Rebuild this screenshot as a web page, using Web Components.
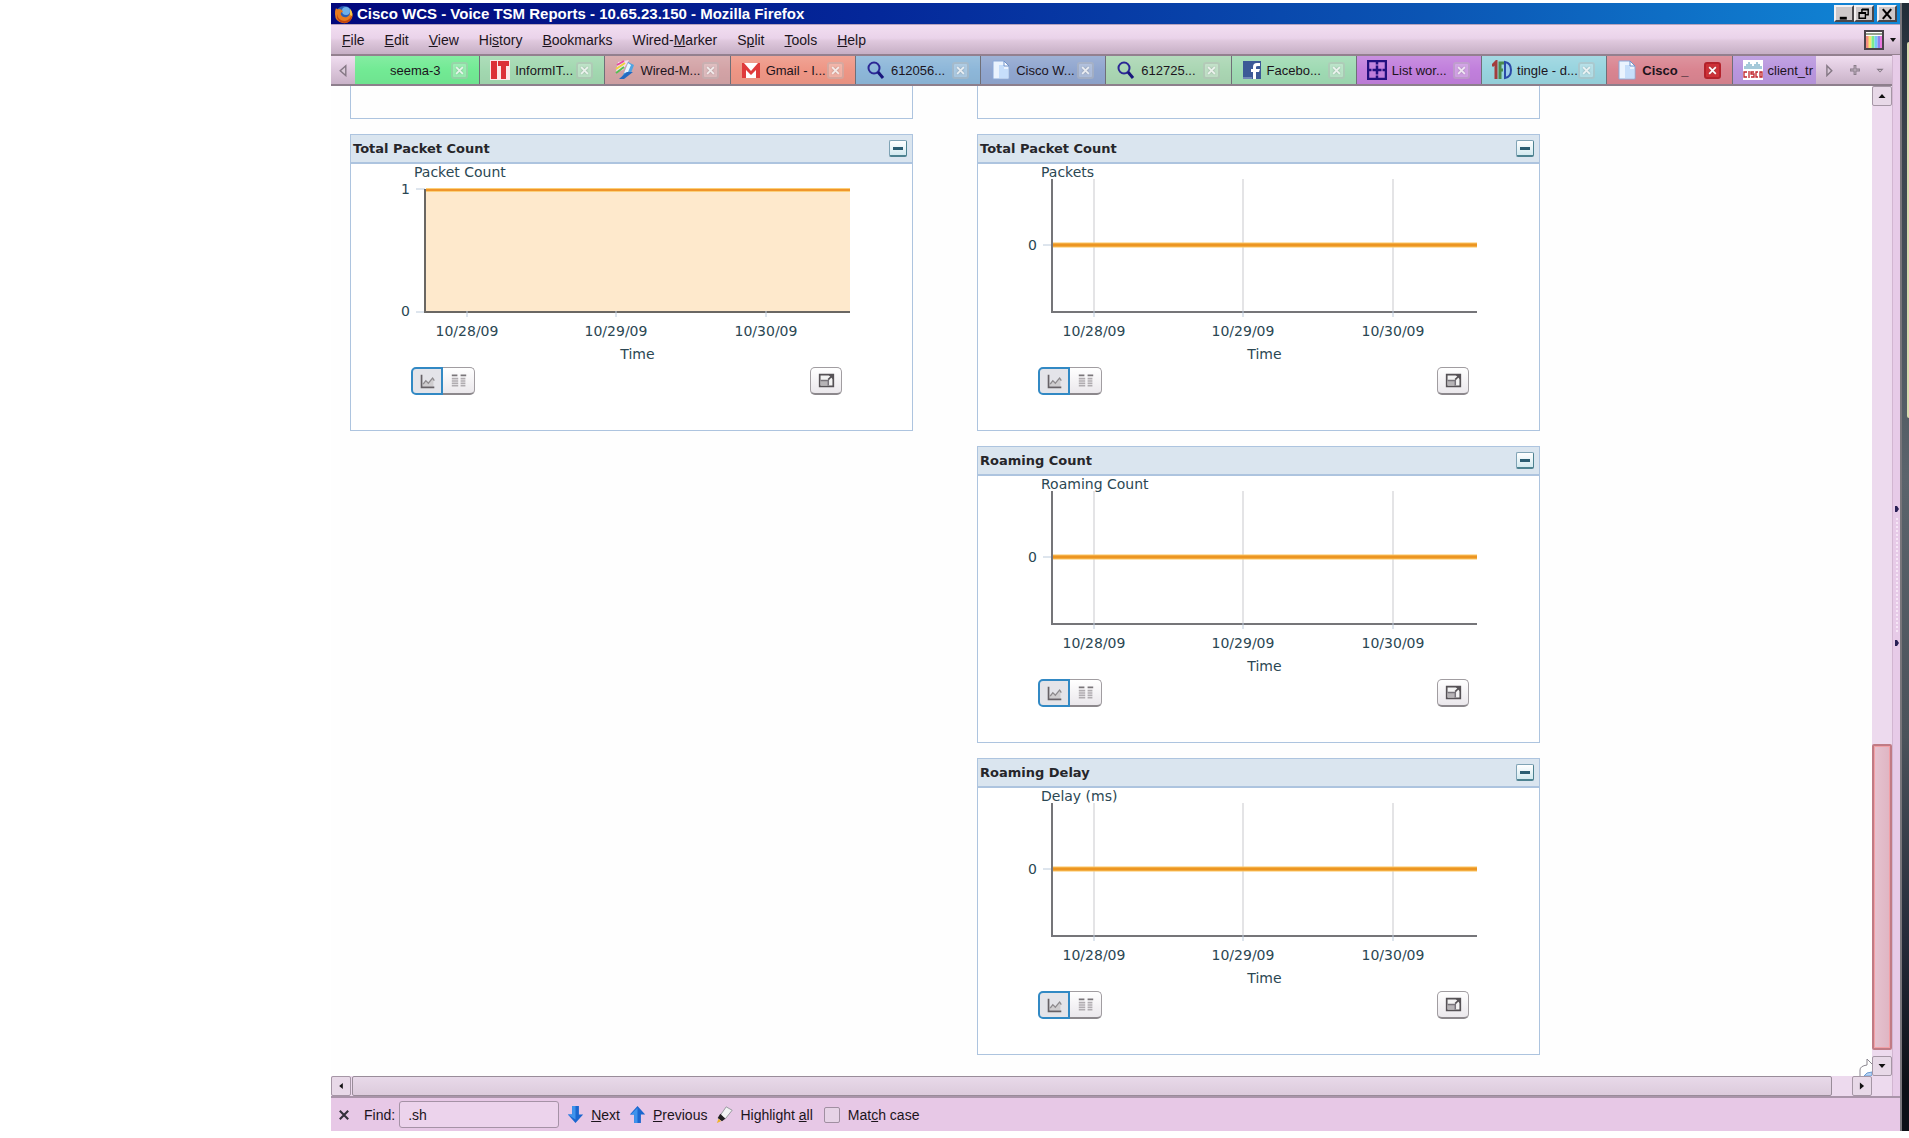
<!DOCTYPE html>
<html lang="en">
<head>
<meta charset="utf-8">
<title>Cisco WCS - Voice TSM Reports</title>
<style>
  body {
    margin: 0;
    background: #fff;
    font-family: "Liberation Sans", Arial, sans-serif;
    font-size: 14px;
    color: #1c141c;
  }

  .screen {
    display: grid;
    grid-template-columns: minmax(0, 331fr) minmax(0, 1569fr) minmax(0, 9fr);
    min-height: 100vh;
    box-sizing: border-box;
    padding: 3px 0 7px;
  }

  browser-window { grid-column: 2; }

  /* slice of the desktop that shows to the right of the window */
  .desktop {
    background: linear-gradient(#222d38, #3a444c 12%, #5b646c 42%, #4b535b 65%, #252c3a 83%, #0c1016 96%);
    border-left: 2px solid #77757a;
    display: flex;
    justify-content: flex-end;
    align-items: flex-start;
  }

  .desktop span {
    width: 2px;
    height: 33vh;
    margin-top: 39px;
    background: #d9dcae;
    border-radius: 2px 0 0 2px;
  }

  .reports {
    display: grid;
    grid-template-columns: minmax(0, 1fr) minmax(0, 1fr);
    column-gap: 64px;
    padding: 0 332px 21px 19px;
  }

  .column {
    display: flex;
    flex-direction: column;
    gap: 15px;
  }

  .cut-panel {
    height: 32px;
    border: 1px solid #adc4df;
    border-width: 0 1px 1px;
  }
</style>
</head>
<body>
<div class="screen">
  <browser-window>
    <title-bar slot="title">Cisco WCS - Voice TSM Reports - 10.65.23.150 - Mozilla Firefox</title-bar>
    <menu-bar slot="menu"></menu-bar>
    <tab-bar slot="tabs">
      <browser-tab color="#72ea94">seema-3</browser-tab>
      <browser-tab color="#a2d8b0" icon="informit">InformIT...</browser-tab>
      <browser-tab color="#d3a3a6" icon="marker">Wired-M...</browser-tab>
      <browser-tab color="#ee9685" icon="gmail">Gmail - I...</browser-tab>
      <browser-tab color="#8db7d9" icon="search">612056...</browser-tab>
      <browser-tab color="#90a6cf" icon="page">Cisco W...</browser-tab>
      <browser-tab color="#aad6b3" icon="search">612725...</browser-tab>
      <browser-tab color="#9fdab3" icon="facebook">Facebo...</browser-tab>
      <browser-tab color="#c17fdc" icon="grid">List wor...</browser-tab>
      <browser-tab color="#98d4df" icon="tfd">tingle - d...</browser-tab>
      <browser-tab color="#d98490" icon="page" active>Cisco _</browser-tab>
      <browser-tab color="#b996de" icon="cisco" noclose>client_tr</browser-tab>
    </tab-bar>

    <div class="reports">
      <div class="column">
        <div class="cut-panel"></div>
        <chart-panel heading="Total Packet Count" label="Packet Count" type="area"></chart-panel>
      </div>
      <div class="column">
        <div class="cut-panel"></div>
        <chart-panel heading="Total Packet Count" label="Packets"></chart-panel>
        <chart-panel heading="Roaming Count" label="Roaming Count"></chart-panel>
        <chart-panel heading="Roaming Delay" label="Delay (ms)"></chart-panel>
      </div>
    </div>

    <find-bar slot="find"></find-bar>
  </browser-window>
  <div class="desktop"><span></span></div>
</div>

<script>
const ICONS = {
  firefox: `<circle cx="10" cy="10" r="8" fill="#2a5fb4"/><circle cx="12" cy="7" r="4" fill="#6fb0e8"/>
    <path d="M2 4 Q3 6 5 5 Q8 5 9 8 Q6 8 7 11 Q9 14 13 13 Q17 11 16 5 Q20 10 18 14 Q15 20 9 19 Q1 18 1 10 Q1 6 2 4Z" fill="#e77a1d"/>
    <path d="M3 10 Q4 17 11 17 Q16 16 18 11 Q18 19 10 19 Q2 18 3 10Z" fill="#c2440f"/><path d="M16 5 Q19 8 18 12 L16 11Z" fill="#f7c846"/>`,
  informit: `<rect width="20" height="20" fill="#fbe9ea"/><path d="M1 1h6v18H1zM8 1h11v5h-3v13h-5V6H8z" fill="#dc3038"/>`,
  marker: `<path d="M3 2 L14 0 L8 10 L1 12Z" fill="#f3dff0"/><path d="M2 5 L9 1" stroke="#e44aa0" stroke-width="2"/>
    <path d="M1 9 L10 3" stroke="#efd23c" stroke-width="2"/><path d="M1 13 L9 7" stroke="#55bf52" stroke-width="2"/>
    <path d="M13 2 L19 5 L16 13 L6 19 L10 11Z" fill="#4fa3e2"/><path d="M13 3 L16 5 L13 12 L9 13Z" fill="#eaf6ff"/><path d="M4 19 L12 12 L18 12 L9 19Z" fill="#236ac1"/>`,
  gmail: `<path d="M1 3h18v15H1z" fill="#fff"/><path d="M1 18V3h2l7 8 7-8h2v15h-4V10l-5 5-5-5v8z" fill="#df3b3b"/>`,
  search: `<circle cx="8" cy="8" r="5.5" fill="none" stroke="#2b2795" stroke-width="2"/><path d="M12 12 L17 18" stroke="#19167c" stroke-width="3"/>`,
  page: `<path d="M2 1h11l5 5v13H2z" fill="#eaf3fe" stroke="#8ba9d8"/><path d="M8 5h5v4h4v9H8z" fill="#c6defb"/><path d="M13 1v5h5z" fill="#fff" stroke="#6f92cb"/>`,
  facebook: `<rect x="1" y="1" width="18" height="18" fill="#3c5a97"/><path d="M11 19v-7H9V9h2V7q0-4 4-4h3v3h-2q-2 0-2 1v2h4l-1 3h-3v7z" fill="#fff"/><path d="M1 17h9v2H1z" fill="#7187b8"/>`,
  grid: `<path d="M1 1h18v18H1zM1 10h18M10 1v18" fill="none" stroke="#22107f" stroke-width="2.5"/><path d="M8 5h4M8 15h4M5 8v4M15 8v4" stroke="#c17fdc"/>`,
  tfd: `<path d="M0 6 L4 2 V19" fill="none" stroke="#a33c3c" stroke-width="3"/><path d="M8 19V3h4M8 10h3" fill="none" stroke="#4c8b4e" stroke-width="3"/>
    <path d="M13 2v16q6-1 6-8t-6-8z" fill="#9ccbe8" stroke="#2b4aa8" stroke-width="2"/>`,
  cisco: `<rect width="20" height="20" fill="#fff"/><path d="M2 6v3M4 4v5M6 2v7M8 4v5M10 6v3M12 4v5M14 2v7M16 4v5M18 6v3" stroke="#4d93b3"/>
    <path d="M4 12H1v5h3M6 11v7M11 12H8v2h3v3H8M15 12h-2v5h2M17 12h2v5h-2z" fill="none" stroke="#c0242b" stroke-width="1.300"/>`,
  palette: `<rect x="1" y="1" width="18" height="18" fill="#fff" stroke="#4b434b" stroke-width="2"/><path d="M2 4h16" stroke="#96a08e" stroke-width="2"/>
    <path d="M3.500 6v12" stroke="#f58e82" stroke-width="3"/><path d="M6 6v12" stroke="#f4e671" stroke-width="3"/><path d="M9 6v12" stroke="#7bea8d" stroke-width="3"/>
    <path d="M12 6v12" stroke="#74c9f5" stroke-width="3"/><path d="M15 6v12" stroke="#8d80ef" stroke-width="3"/><path d="M17 6v12" stroke="#ea77dd" stroke-width="2"/>`,
  min: `<path d="M4 16h10" stroke="#000" stroke-width="4"/>`,
  restore: `<path d="M7 3h9v8h-3M7 3v4" fill="none" stroke="#000" stroke-width="2"/><path d="M3 8h9v8H3z" fill="none" stroke="#000" stroke-width="2"/><path d="M3 9h9M7 4h9" stroke="#000" stroke-width="2"/>`,
  close: `<path d="M4 3 L16 17M16 3 L4 17" stroke="#000" stroke-width="3"/>`,
  cross: `<path d="M4 4 L16 16M16 4 L4 16" stroke="currentColor" stroke-width="3"/>`,
  left: `<path d="M14 4 L6 11 L14 18Z" fill="#d9c9d8" stroke="#857885" stroke-width="2"/>`,
  right: `<path d="M7 4 L14 11 L7 18Z" fill="#d9c9d8" stroke="#857885" stroke-width="2"/>`,
  plus: `<path d="M10 3v14M3 10h14" stroke="#857885" stroke-width="4"/><path d="M10 4v12M4 10h12" stroke="#d9c9d8" stroke-width="1"/>`,
  drop: `<path d="M4 8h12l-6 6z" fill="#857885"/><path d="M8 10h4l-2 2z" fill="#e6d9e5"/>`,
  up: `<path d="M5 13h10l-5-6z" fill="#111"/>`,
  down: `<path d="M5 7h10l-5 6z" fill="#111"/>`,
  sleft: `<path d="M13 5v10l-6-5z" fill="#111"/>`,
  sright: `<path d="M7 5v10l6-5z" fill="#111"/>`,
  next: `<path d="M6 0h8v10h5l-9 10L1 10h5z" fill="#1b67cf"/><path d="M6 0h4v16L1 10h5z" fill="#3f93ec"/>`,
  prev: `<path d="M6 20h8V10h5L10 0 1 10h5z" fill="#1b67cf"/><path d="M6 20h4V2L2 10h4z" fill="#3f93ec"/>`,
  highlight: `<path d="M12 1 L19 5 L11 15 L5 11Z" fill="#f2f4f4" stroke="#8b8f94"/><path d="M5 9 L11 15 L7 18 L2 14Z" fill="#222"/><path d="M3 15 L6 18 L1 20Z" fill="#f0b428"/>`,
  line: `<path d="M4 12 L8 9 L12 12 L17 6 V16 H4Z" fill="#cfcdcf"/><path d="M3 2v15h15" fill="none" stroke="#666166" stroke-width="2"/><path d="M5 13 L8 9 L11 12 L16 6 L18 9" fill="none" stroke="#8e8b8e" stroke-width="1.500"/>`,
  table: `<path d="M1 3h7M12 3h7" stroke="#7a767a" stroke-width="2"/><path d="M1 7h8M12 7h6M1 10h8M12 10h6M1 13h8M12 13h6M1 16h8M12 16h6" stroke="#b0acb0" stroke-width="2"/>`,
  expand: `<path d="M2 3h16v14H2z" fill="#f3f3f3" stroke="#565256" stroke-width="2"/><path d="M3 10h8v6H3z" fill="#b7b4b7"/>
    <path d="M3 10h9v6" fill="none" stroke="#77737a" stroke-width="2"/><path d="M12 9 L16 5" stroke="#565256" stroke-width="2"/><path d="M12 3h6v6z" fill="#565256"/>`
};

const icon = (name, size = 20) =>
  `<svg width="${size}" height="${size}" viewBox="0 0 20 20" aria-hidden="true">${ICONS[name] || ''}</svg>`;

// resets used by every shadow root
const BASE = `
  :host, * { box-sizing: border-box; }
  svg { display: block; flex: none; }
  button {
    font: inherit;
    color: inherit;
    margin: 0;
    padding: 0;
    border: 0;
    background: none;
    display: flex;
    align-items: center;
    justify-content: center;
    white-space: nowrap;
  }
`;


class BrowserWindow extends HTMLElement {
  constructor() {
    super();
    this.attachShadow({ mode: 'open' }).innerHTML = `
      <style>
        ${BASE}
        :host { display: flex; flex-direction: column; }
        .middle { display: flex; flex: 1; }
        .inner { flex: 1; min-width: 0; display: flex; flex-direction: column; }
        .view { flex: 1; display: flex; }
        .page { flex: 1; min-width: 0; position: relative; background: #fefefe; }
        .hint { position: absolute; right: 0; bottom: 0; }
        .vscroll, .hscroll { background: #eddaee; display: flex; flex: none; }
        .vscroll { width: 20px; flex-direction: column; }
        .hscroll { height: 20px; padding-right: 20px; }
        .vscroll .track, .hscroll .track { flex: 1; display: flex; }
        .vscroll .track { flex-direction: column; padding-bottom: 6px; }
        .hscroll .track { padding: 0 20px 0 1px; }
        .vscroll .gap { flex: 641; }
        .vscroll .thumb {
          flex: 303;
          border: 2px solid #c07b85;
          border-radius: 2px;
          background: linear-gradient(90deg, #e6c3d0, #dfb5c3);
          box-shadow: inset 0 0 0 1px #f2a0a6;
        }
        .hscroll .thumb {
          flex: 1;
          border: 1px solid #998c99;
          border-radius: 2px;
          background: linear-gradient(#e8d9e9, #dccbdc);
        }
        button.arrow {
          width: 20px;
          height: 20px;
          border: 1px solid #a596a5;
          border-radius: 2px;
          background: #e8d9e8;
        }
        .splitter {
          width: 8px;
          background: #e7cbe8;
          border-left: 1px solid #d2b6d1;
          display: flex;
          flex-direction: column;
          align-items: center;
          justify-content: center;
          gap: 6px;
        }
        .dots { width: 2px; height: 116px; background: repeating-linear-gradient(#f6e6f6 0 2px, #e7cbe8 2px 4px); }
      </style>
      <slot name="title"></slot>
      <slot name="menu"></slot>
      <div class="middle">
        <div class="inner">
          <slot name="tabs"></slot>
          <div class="view">
            <div class="page">
              <slot></slot>
              <svg class="hint" width="13" height="18" viewBox="0 0 13 18">
                <path d="M1 18v-6q0-4 7-5V1l5 5" fill="none" stroke="#8b8790"/>
                <path d="M5 18q2-4 8-4v4z" fill="#b7d4f3" stroke="#6e9bd2"/>
              </svg>
            </div>
            <div class="vscroll">
              <button class="arrow" aria-label="Scroll up">${icon('up', 14)}</button>
              <div class="track"><div class="gap"></div><div class="thumb"></div></div>
              <button class="arrow" aria-label="Scroll down">${icon('down', 14)}</button>
            </div>
          </div>
          <div class="hscroll">
            <button class="arrow" aria-label="Scroll left">${icon('sleft', 12)}</button>
            <div class="track"><div class="thumb"></div></div>
            <button class="arrow" aria-label="Scroll right">${icon('sright', 14)}</button>
          </div>
        </div>
        <div class="splitter">
          <svg width="4" height="6"><path d="M0 0h2l2 3-2 3H0z" fill="#292055"/></svg>
          <div class="dots"></div>
          <svg width="4" height="6"><path d="M0 0h2l2 3-2 3H0z" fill="#292055"/></svg>
        </div>
      </div>
      <slot name="find"></slot>
    `;
  }
}
customElements.define('browser-window', BrowserWindow);


class TitleBar extends HTMLElement {
  constructor() {
    super();
    this.attachShadow({ mode: 'open' }).innerHTML = `
      <style>
        ${BASE}
        :host {
          display: flex;
          align-items: center;
          height: 21px;
          padding: 0 3px;
          color: #fff;
          background: linear-gradient(90deg, #02087c, #04289a 35%, #0b55b4 70%, #1187d6);
          font-size: 15px;
          font-weight: bold;
        }
        .text { flex: 1; margin-left: 3px; white-space: nowrap; }
        button {
          width: 20px;
          height: 17px;
          background: #cdc8c9;
          border: 2px solid;
          border-color: #f4f1f2 #4a474a #4a474a #f4f1f2;
        }
        button:last-child { margin-left: 3px; }
      </style>
      ${icon('firefox')}
      <span class="text"><slot></slot></span>
      <button aria-label="Minimize">${icon('min', 14)}</button>
      <button aria-label="Restore">${icon('restore', 14)}</button>
      <button aria-label="Close">${icon('close', 14)}</button>
    `;
  }
}
customElements.define('title-bar', TitleBar);


class MenuBar extends HTMLElement {
  constructor() {
    super();
    const items = ['<u>F</u>ile', '<u>E</u>dit', '<u>V</u>iew', 'Hi<u>s</u>tory', '<u>B</u>ookmarks',
      'Wired-<u>M</u>arker', 'S<u>p</u>lit', '<u>T</u>ools', '<u>H</u>elp'];
    this.attachShadow({ mode: 'open' }).innerHTML = `
      <style>
        ${BASE}
        :host {
          display: flex;
          align-items: center;
          height: 31px;
          padding: 0 4px 0 1px;
          border-top: 1px solid #b7a3bd;
          border-bottom: 1px solid #93808f;
          background: linear-gradient(#f2def1, #ead3ea 45%, #dfc8dd 55%, #c6afc5);
        }
        nav { display: flex; flex: 1; }
        nav button { padding: 0 10px; }
        .theme { gap: 6px; }
      </style>
      <nav>${items.map(i => `<button><span>${i}</span></button>`).join('')}</nav>
      <button class="theme" aria-label="Theme">${icon('palette')}<svg width="6" height="4"><path d="M0 0h6L3 4z" fill="#111"/></svg></button>
    `;
  }
}
customElements.define('menu-bar', MenuBar);


class TabBar extends HTMLElement {
  constructor() {
    super();
    this.attachShadow({ mode: 'open' }).innerHTML = `
      <style>
        ${BASE}
        :host {
          display: flex;
          height: 31px;
          border-bottom: 2px solid #8d7f8c;
          border-top: 1px solid #93808f;
          background: linear-gradient(#f0ddf0, #c9b2c8);
          font-size: 13px;
        }
        .prev { width: 24px; }
        .tabs {
          flex: 1;
          min-width: 0;
          display: grid;
          grid-template-columns: repeat(11, minmax(0, 3fr)) minmax(0, 2fr);
        }
        .side { width: 76px; display: flex; align-items: center; justify-content: space-around; }
      </style>
      <button class="prev" aria-label="Scroll tabs left">${icon('left', 14)}</button>
      <div class="tabs"><slot></slot></div>
      <div class="side">
        <button aria-label="Scroll tabs right">${icon('right', 14)}</button>
        <button aria-label="New tab">${icon('plus', 14)}</button>
        <button aria-label="List all tabs">${icon('drop', 12)}</button>
      </div>
    `;
  }
}
customElements.define('tab-bar', TabBar);


class BrowserTab extends HTMLElement {
  constructor() {
    super();
    this.attachShadow({ mode: 'open' });
  }

  connectedCallback() {
    const close = this.hasAttribute('noclose') ? '' :
      `<button class="close" aria-label="Close tab">${icon('cross', 11)}</button>`;
    this.shadowRoot.innerHTML = `
      <style>
        ${BASE}
        :host {
          display: flex;
          align-items: center;
          overflow: hidden;
          padding: 0 11px 0 10px;
          border-right: 1px solid #6f6f78;
          background: linear-gradient(#ffffff22, #ffffff00 50%, #00000008) ${this.getAttribute('color')};
        }
        :host([active]) { font-weight: bold; }
        :host([noclose]) { padding-right: 0; border-right: 0; }
        .label { flex: 1; min-width: 0; gap: 5px; justify-content: flex-start; }
        .close {
          flex: none;
          width: 17px;
          height: 17px;
          border: 2px solid #8884;
          border-radius: 3px;
          background: #fff4;
          color: #fffc;
        }
        .close svg { filter: drop-shadow(0 0 1px #6668); }
        :host([active]) .close { background: #cf3037; border-color: #b3222b; color: #fff; }
      </style>
      <button class="label">${icon(this.getAttribute('icon'))}<span><slot></slot></span></button>
      ${close}
    `;
  }
}
customElements.define('browser-tab', BrowserTab);


/*
 * One report portlet: header, chart and the buttons under it.
 * type="area" fills from 0 to 1, otherwise a flat line at 0 is drawn.
 */
class ChartPanel extends HTMLElement {
  constructor() {
    super();
    this.attachShadow({ mode: 'open' });
  }

  // plot is drawn on 434 x 138, axis starts 9 in from the tick
  plot() {
    const ticks = [51, 200, 350];
    if (this.getAttribute('type') === 'area') {
      return `
        <rect x="10" y="11" width="424" height="122" fill="#fee9cc"/>
        <path d="M0 10h9M0 133h9" stroke="#bccbdc"/>
        <path d="M9 10v123h425" fill="none" stroke="#6a6763" stroke-width="2"/>
        <path d="M10 11h424" stroke="#fbcf7a" stroke-width="4"/>
        <path d="M10 11h424" stroke="#f0962a" stroke-width="2"/>
        ${ticks.map(x => `<path d="M${x} 132v6" stroke="#bccbdc"/>`).join('')}`;
    }
    return `
      ${ticks.map(x => `<path d="M${x} 0v132" stroke="#c9c9cd"/>`).join('')}
      <path d="M0 66h9" stroke="#bccbdc"/>
      <path d="M9 0v133h425" fill="none" stroke="#757579" stroke-width="2"/>
      <path d="M10 66h424" stroke="#fbc562" stroke-width="5"/>
      <path d="M10 66h424" stroke="#ec9522" stroke-width="3"/>
      ${ticks.map(x => `<path d="M${x} 132v6" stroke="#bccbdc"/>`).join('')}`;
  }

  connectedCallback() {
    const area = this.getAttribute('type') === 'area';
    this.shadowRoot.innerHTML = `
      <style>
        ${BASE}
        :host {
          display: block;
          border: 1px solid #adc4df;
          background: #fff;
          color: #2b4753;
          font-family: "DejaVu Sans", Verdana, sans-serif;
          font-size: 14px;
          line-height: 14px;
        }
        header {
          height: 29px;
          display: flex;
          align-items: center;
          justify-content: space-between;
          padding: 0 5px 0 2px;
          background: #dae5ef;
          border-bottom: 2px solid #adc4df;
        }
        h2 { margin: 0; font-size: 13px; font-weight: bold; color: #26262a; }
        header button {
          width: 18px;
          height: 17px;
          border: 1px solid #7fa3b5;
          border-right-color: #4d8290;
          border-bottom: 2px solid #4d8290;
          border-radius: 2px;
          background: linear-gradient(#fff, #d3eaf0);
        }
        .label { padding: 1px 0 0 63px; }
        .chart { display: grid; grid-template-columns: 59px minmax(0, 1fr); column-gap: 6px; padding-right: 62px; }
        .values {
          display: flex;
          flex-direction: column;
          justify-content: space-between;
          align-items: flex-end;
          line-height: 12px;
          padding-top: 4px;
        }
        .values.mid { justify-content: center; padding: 0 0 6px; }
        .chart svg { width: 100%; height: 138px; }
        .dates {
          grid-column: 2;
          display: grid;
          grid-template-columns: 84fr 214fr 86fr 41fr;
          justify-items: center;
          padding-left: 9px;
          margin-top: 7px;
        }
        .time { grid-column: 2; text-align: center; padding-left: 9px; margin-top: 9px; }
        .tools { display: flex; margin-top: 6px; padding: 0 70px 35px 60px; }
        .tools button {
          width: 32px;
          height: 28px;
          border: 1px solid #a19da1;
          border-bottom: 2px solid #8c888c;
          border-radius: 5px;
          background: linear-gradient(#fff, #ebe8ec);
        }
        .tools .on { border: 2px solid #3289c4; border-radius: 5px 0 0 5px; background: #e4e4e9; }
        .tools .off { border-left: 0; border-radius: 0 5px 5px 0; }
        .tools .expand { margin-left: auto; }
      </style>
      <header>
        <h2>${this.getAttribute('heading')}</h2>
        <button aria-label="Collapse"><svg width="10" height="3"><path d="M0 0h10v3H0z" fill="#2b5d72"/></svg></button>
      </header>
      <div class="label">${this.getAttribute('label')}</div>
      <div class="chart">
        <div class="values ${area ? '' : 'mid'}">${area ? '<span>1</span><span>0</span>' : '<span>0</span>'}</div>
        <svg viewBox="0 0 434 138" preserveAspectRatio="none">${this.plot()}</svg>
        <div class="dates"><span>10/28/09</span><span>10/29/09</span><span>10/30/09</span></div>
        <div class="time">Time</div>
      </div>
      <div class="tools">
        <button class="on" aria-label="Chart view">${icon('line', 17)}</button>
        <button class="off" aria-label="Table view">${icon('table', 16)}</button>
        <button class="expand" aria-label="Enlarge">${icon('expand', 17)}</button>
      </div>
    `;
  }
}
customElements.define('chart-panel', ChartPanel);


class FindBar extends HTMLElement {
  constructor() {
    super();
    this.attachShadow({ mode: 'open' }).innerHTML = `
      <style>
        ${BASE}
        :host {
          display: flex;
          align-items: center;
          height: 35px;
          padding-left: 7px;
          background: #e7c8e6;
          border-top: 2px solid #a994a9;
        }
        .close { width: 12px; margin-right: 14px; color: #34313b; }
        input[type=text] {
          width: 160px;
          height: 27px;
          margin: 0 8px 0 4px;
          padding: 0 8px;
          font: inherit;
          color: inherit;
          border: 1px solid #a592a6;
          border-radius: 3px;
          background: #ecd3ec;
        }
        .item { gap: 7px; margin-right: 9px; }
        label { white-space: nowrap; }
        input[type=checkbox] {
          appearance: none;
          width: 16px;
          height: 16px;
          margin: 0 8px 0 2px;
          border: 1px solid #a08fa1;
          border-radius: 2px;
          background: #e6d3e6;
        }
      </style>
      <button class="close" aria-label="Close find bar">${icon('cross', 14)}</button>
      <label for="find">Find:</label>
      <input type="text" id="find" value=".sh">
      <button class="item">${icon('next', 17)}<span><u>N</u>ext</span></button>
      <button class="item">${icon('prev', 17)}<span><u>P</u>revious</span></button>
      <button class="item">${icon('highlight', 17)}<span>Highlight <u>a</u>ll</span></button>
      <input type="checkbox" id="case"><label for="case">Mat<u>c</u>h case</label>
    `;
  }
}
customElements.define('find-bar', FindBar);
</script>
</body>
</html>
